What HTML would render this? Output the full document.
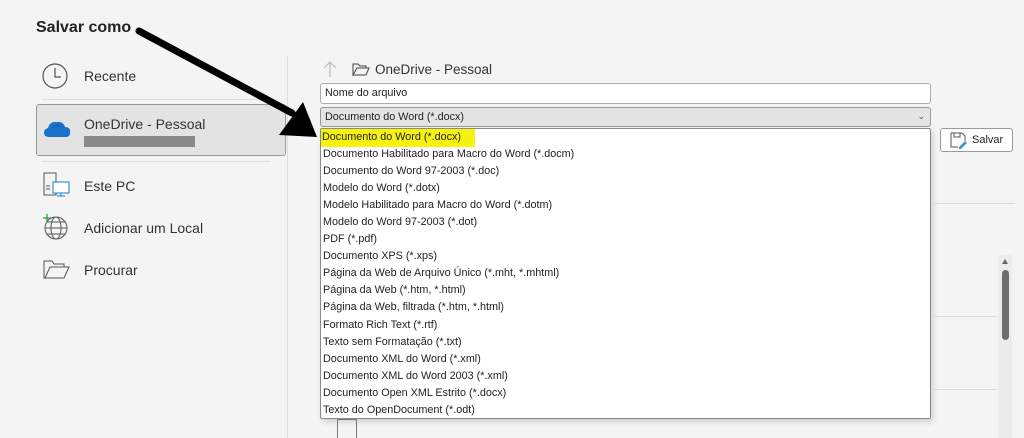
<!DOCTYPE html>
<html><head><meta charset="utf-8"><style>
*{margin:0;padding:0;box-sizing:border-box}
body{width:1024px;height:438px;overflow:hidden;background:#f4f4f4;font-family:"Liberation Sans",sans-serif;position:relative;color:#222}
.abs{position:absolute}
.nav{position:absolute;left:84px;font-size:14px;color:#333}
.dd{position:absolute;left:320px;top:128px;width:611px;height:291px;background:#fff;border:1px solid #8a8a8a;border-radius:2px;box-shadow:2px 3px 6px rgba(0,0,0,.15)}
.dd div{height:17.06px;line-height:17px;font-size:10.8px;padding-left:2px;color:#222;white-space:nowrap}
</style></head><body>
<div class="abs" style="left:36px;top:19px;font-size:16px;font-weight:bold;color:#222">Salvar como</div>
<div class="abs" style="left:287px;top:56px;width:1px;height:382px;background:#ddd"></div>
<svg class="abs" style="left:40px;top:62px" width="30" height="30"><circle cx="15" cy="14" r="12" fill="none" stroke="#555" stroke-width="1.2"/><path d="M15 6v9h6" fill="none" stroke="#555" stroke-width="1.2"/></svg>
<div class="nav" style="top:68px">Recente</div>
<div class="abs" style="left:42px;top:99px;width:228px;height:1px;background:#ddd"></div>
<div class="abs" style="left:36px;top:104px;width:250px;height:52px;background:#e3e3e3;border:1px solid #999;border-radius:3px"></div>
<svg class="abs" style="left:42px;top:118px" width="30" height="22"><path d="M3 18 Q0 12 6 10 Q8 3 15 4 Q21 3 23 9 Q29 9 28 15 Q28 19 24 19 H6 Z" fill="#1a73c9"/><path d="M10 10 Q15 6 20 9" fill="none" stroke="#0f5fb0"/></svg>
<div class="nav" style="top:116px">OneDrive - Pessoal</div>
<div class="abs" style="left:84px;top:136px;width:111px;height:11px;background:#8a8a8a"></div>
<div class="abs" style="left:42px;top:161px;width:228px;height:1px;background:#ddd"></div>
<svg class="abs" style="left:42px;top:172px" width="30" height="28"><rect x="2" y="1" width="12" height="22" fill="none" stroke="#555"/><path d="M4 14h4M4 17h4" stroke="#555"/><rect x="11" y="10" width="16" height="11" fill="#fff" stroke="#1a7fbf"/><path d="M19 21v3M15 24h8" stroke="#1a7fbf"/></svg>
<div class="nav" style="top:178px">Este PC</div>
<svg class="abs" style="left:40px;top:212px" width="30" height="30"><circle cx="16" cy="16" r="11" fill="none" stroke="#555"/><ellipse cx="16" cy="16" rx="5" ry="11" fill="none" stroke="#555"/><path d="M5 16h22M7 10h18M7 22h18" stroke="#555"/><path d="M7 2v8M3 6h8" stroke="#2a9d3a" stroke-width="1.3"/></svg>
<div class="nav" style="top:220px">Adicionar um Local</div>
<svg class="abs" style="left:42px;top:258px" width="30" height="22"><path d="M2 3h8l2 3h10v3H8L3 20H2Z M8 9h19l-5 11H3Z" fill="none" stroke="#555"/></svg>
<div class="nav" style="top:262px">Procurar</div>

<svg class="abs" style="left:320px;top:59px" width="20" height="20"><path d="M10 18V3M4 9l6-6 6 6" fill="none" stroke="#bbb" stroke-width="1.2"/></svg>
<svg class="abs" style="left:352px;top:62px" width="18" height="14"><path d="M1 2h5l2 2h6v2H5L1 13Z M5 6h12l-3 7H1Z" fill="none" stroke="#444"/></svg>
<div class="abs" style="left:375px;top:62px;font-size:13.5px;color:#333">OneDrive - Pessoal</div>
<div class="abs" style="left:320px;top:83px;width:611px;height:21px;background:#fff;border:1px solid #aaa;border-radius:3px;font-size:10.8px;line-height:19px;padding-left:4px">Nome do arquivo</div>
<div class="abs" style="left:320px;top:107px;width:611px;height:20px;background:#e4e4e4;border:1px solid #999;border-radius:3px;font-size:10.8px;line-height:18px;padding-left:4px">Documento do Word (*.docx)<span style="position:absolute;right:5px;top:-1px;font-size:9px;color:#555">&#8964;</span></div>
<div class="dd">
<div><span style="background:#f5f30f;padding:0 14px 0 1px;margin-left:-2px;display:inline-block;height:18px">Documento do Word (*.docx)</span></div>
<div>Documento Habilitado para Macro do Word (*.docm)</div>
<div>Documento do Word 97-2003 (*.doc)</div>
<div>Modelo do Word (*.dotx)</div>
<div>Modelo Habilitado para Macro do Word (*.dotm)</div>
<div>Modelo do Word 97-2003 (*.dot)</div>
<div>PDF (*.pdf)</div>
<div>Documento XPS (*.xps)</div>
<div>Página da Web de Arquivo Único (*.mht, *.mhtml)</div>
<div>Página da Web (*.htm, *.html)</div>
<div>Página da Web, filtrada (*.htm, *.html)</div>
<div>Formato Rich Text (*.rtf)</div>
<div>Texto sem Formatação (*.txt)</div>
<div>Documento XML do Word (*.xml)</div>
<div>Documento XML do Word 2003 (*.xml)</div>
<div>Documento Open XML Estrito (*.docx)</div>
<div>Texto do OpenDocument (*.odt)</div>
</div>
<div class="abs" style="left:940px;top:128px;width:73px;height:24px;background:#fff;border:1px solid #999;border-radius:3px;font-size:11px;line-height:22px;padding-left:31px">Salvar</div>
<svg class="abs" style="left:950px;top:132px" width="18" height="17"><path d="M1 1h11l3 3v5M1 1v14h7" fill="none" stroke="#555"/><path d="M4 1v4h6V1" fill="none" stroke="#555"/><path d="M9 15l6-6 2 2-6 6H9Z" fill="#3b9ad9"/></svg>
<div class="abs" style="left:931px;top:203px;width:84px;height:1px;background:#ddd"></div>
<div class="abs" style="left:931px;top:316px;width:66px;height:1px;background:#ddd"></div>
<div class="abs" style="left:931px;top:389px;width:66px;height:1px;background:#ddd"></div>
<div class="abs" style="left:998px;top:255px;width:14px;height:183px;background:#ececec"></div>
<div class="abs" style="left:1002px;top:259px;width:0;height:0;border-left:3.5px solid transparent;border-right:3.5px solid transparent;border-bottom:5px solid #666"></div>
<div class="abs" style="left:1002px;top:270px;width:7px;height:70px;background:#6e6e6e;border-radius:4px"></div>
<div class="abs" style="left:337px;top:419px;width:20px;height:19px;border:1px solid #777;border-bottom:none"></div>
<svg class="abs" style="left:0;top:0" width="1024" height="438"><path d="M139 31 L292 113" stroke="#000" stroke-width="7" stroke-linecap="round"/><path d="M279 135 L303 102 L317 137 Z" fill="#000"/></svg>
</body></html>
